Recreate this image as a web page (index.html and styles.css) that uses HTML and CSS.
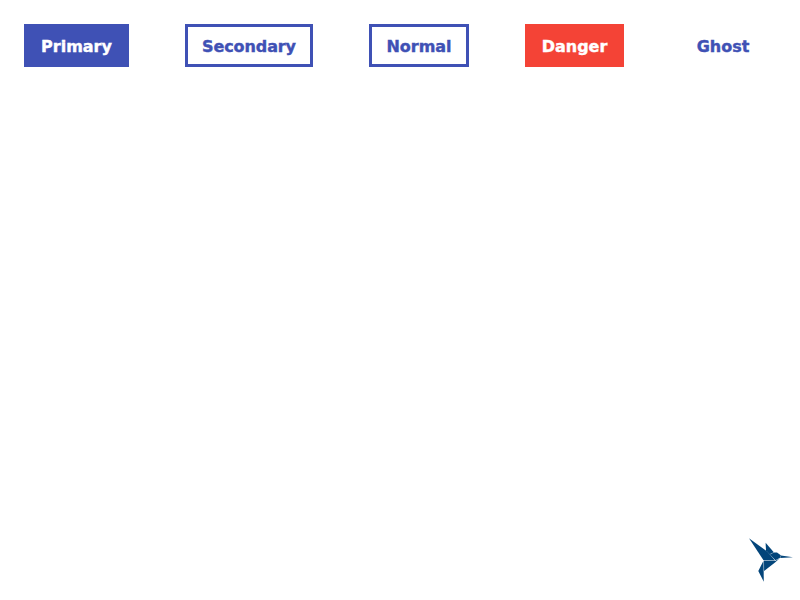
FILE: index.html
```html
<!DOCTYPE html>
<html lang="en">
<head>
<meta charset="utf-8">
<title>Buttons</title>
<link rel="stylesheet" href="styles.css">
</head>
<body>
<main class="buttons">
<button class="button primary">Primary</button>
<button class="button secondary">Secondary</button>
<button class="button normal">Normal</button>
<button class="button danger">Danger</button>
<button class="button ghost">Ghost</button>
</main>
<svg class="logo" viewBox="0 0 44 44" aria-hidden="true">
<g fill="#03457a">
<path d="M0 0.3L18.5 13.8L26 22.5L14.5 22.2Z"/>
<path d="M16.6 4.8L24.8 14.3L20.6 16.2L17 12.4Z"/>
<path d="M20.8 16.6L25 14.5L28 14.4L31.8 17.3L31 19.7L26.5 22.2Z"/>
<path d="M31.8 17.6L44 19.3L31.2 20.1Z"/>
<path d="M15 22.7L26.2 22.9L31 19.9L26 24.6L15.1 33Z"/>
<path d="M14.5 22.8L14.8 43.8L9.3 33Z"/>
</g>
</svg>
</body>
</html>
```
FILE: styles.css
```css
body {
  margin: 0;
  background: #fff;
}

.buttons {
  display: flex;
  gap: 56px;
  padding: 24px;
}

.button {
  flex: none;
  box-sizing: border-box;
  height: 43px;
  padding: 1px 0 0;
  border: 3px solid #3f51b5;
  background: #fff;
  color: #3f51b5;
  font: 900 16px "DejaVu Sans", Verdana, sans-serif;
  -webkit-text-stroke: 0.4px currentColor;
}

.primary {
  width: 105px;
  background: #3f51b5;
  color: #fff;
}

.secondary {
  width: 128px;
  letter-spacing: -0.1px;
}

.normal {
  width: 100px;
}

.danger {
  width: 99px;
  border-color: #f44336;
  background: #f44336;
  color: #fff;
}

.ghost {
  width: 86px;
  border-color: transparent;
}

.logo {
  position: fixed;
  left: 749px;
  top: 538px;
  width: 44px;
  height: 44px;
}
```
